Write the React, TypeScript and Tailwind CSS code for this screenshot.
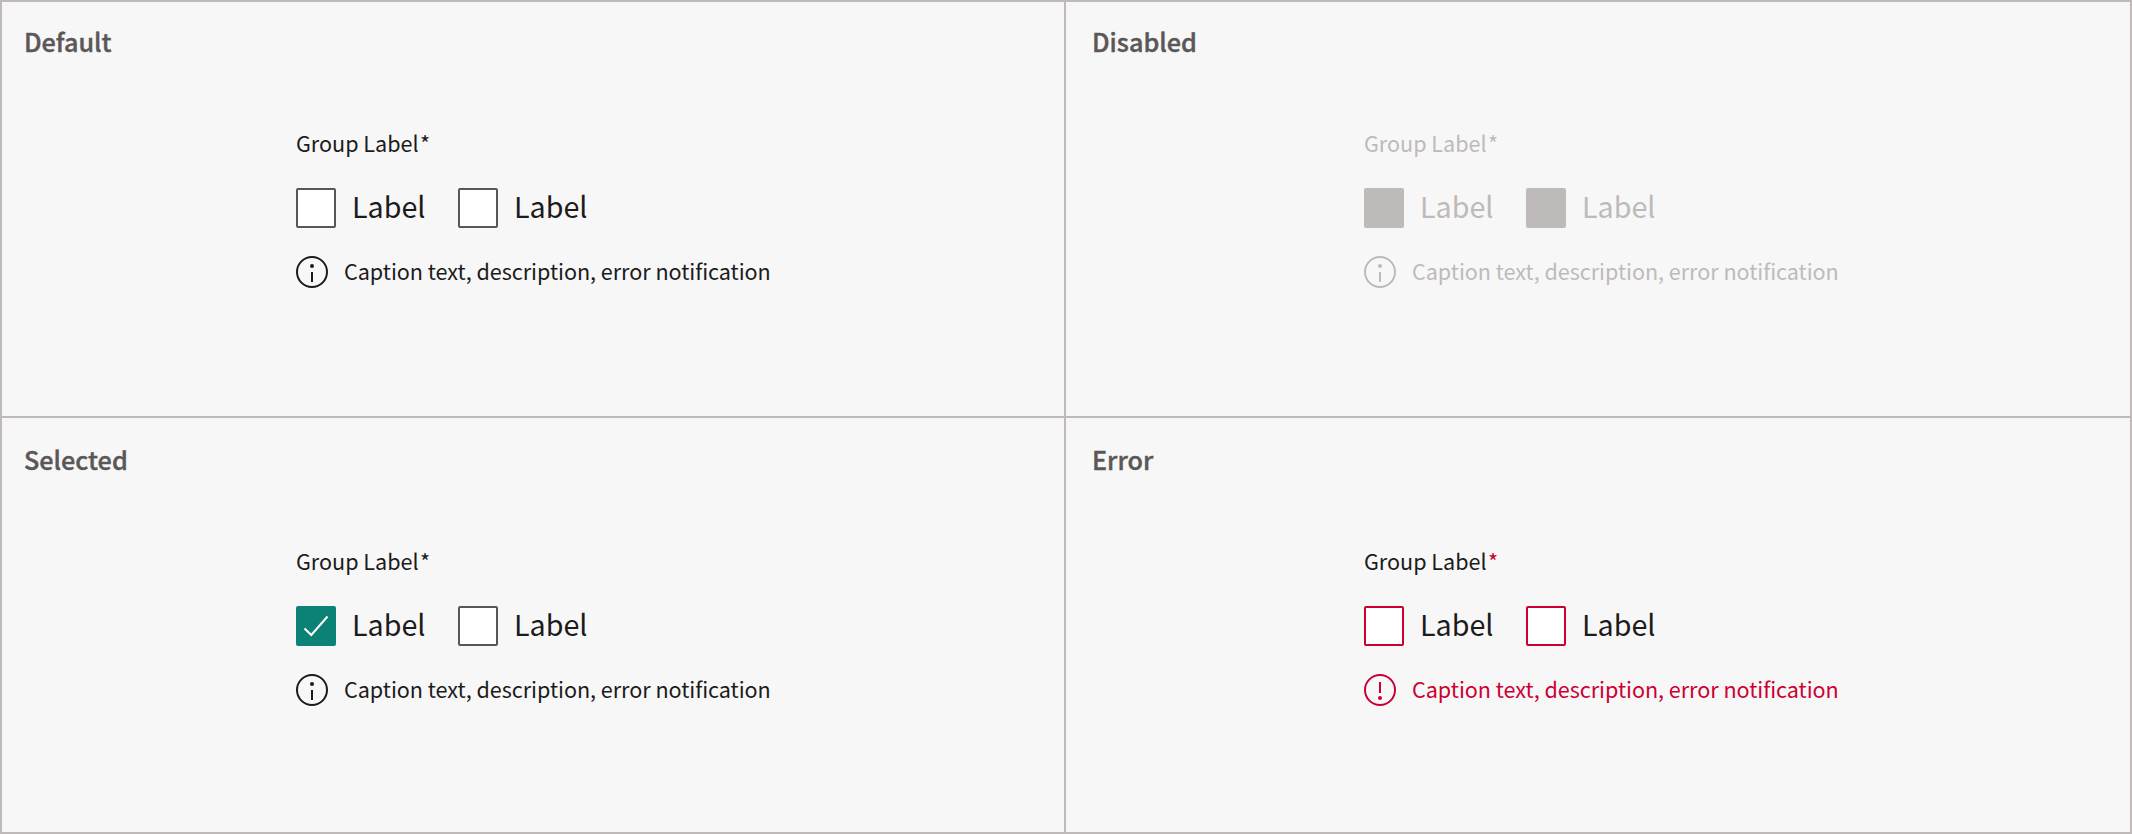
import type { ReactNode } from "react";

function InfoIcon() {
  return (
    <svg className="size-8 shrink-0" viewBox="0 0 32 32" fill="none">
      <circle cx="16" cy="16" r="15" stroke="currentColor" strokeWidth="2" />
      <circle cx="16" cy="10" r="2" fill="currentColor" />
      <path d="M16 16V26" stroke="currentColor" strokeWidth="2" />
    </svg>
  );
}

function AlertIcon() {
  return (
    <svg className="size-8 shrink-0" viewBox="0 0 32 32" fill="none">
      <circle cx="16" cy="16" r="15" stroke="currentColor" strokeWidth="2" />
      <path d="M16 8V19" stroke="currentColor" strokeWidth="2" />
      <circle cx="16" cy="24" r="2" fill="currentColor" />
    </svg>
  );
}

function Checkbox({ box, checked = false }: { box: string; checked?: boolean }) {
  return (
    <div className="flex h-10 items-center gap-4">
      <span className={`flex size-10 shrink-0 rounded-[2px] ${box}`}>
        {checked && (
          <svg className="size-10" viewBox="0 0 40 40" fill="none">
            <path d="M8.5 22.5L15.3 29L31.5 10.5" stroke="white" strokeWidth="2" />
          </svg>
        )}
      </span>
      <span className="w-[74px] pb-1 text-[28.7px] leading-10 whitespace-nowrap">Label</span>
    </div>
  );
}

type GroupProps = {
  text?: string;
  star?: string;
  caption?: string;
  firstBox?: string;
  box: string;
  checked?: boolean;
  icon?: ReactNode;
};

function Group({
  text = "text-[#1c1b1b]",
  star = "",
  caption = "",
  box,
  firstBox = box,
  checked = false,
  icon = <InfoIcon />,
}: GroupProps) {
  return (
    <div className={`flex flex-col ${text}`}>
      <div className="flex h-8 text-[21.6px] leading-8 whitespace-nowrap">
        <span className="w-[122px] tracking-[-0.02px]">Group Label</span>
        <span className={`ml-[2px] ${star}`}>*</span>
      </div>
      <div className="mt-[29px] flex gap-8">
        <Checkbox box={firstBox} checked={checked} />
        <Checkbox box={box} />
      </div>
      <div className={`mt-7 flex h-8 items-center gap-4 ${caption}`}>
        {icon}
        <span className="pb-0.5 text-[21.6px] leading-8 tracking-[-0.04px] whitespace-nowrap">
          Caption text, description, error notification
        </span>
      </div>
    </div>
  );
}

function Panel({ title, className, children }: { title: string; className: string; children: ReactNode }) {
  return (
    <section className={`border-[#bfb9b9] ${className}`}>
      <h2 className="h-10 text-[25.2px] leading-10 font-medium text-[#5b5757] [-webkit-text-stroke:0.4px_#5b5757]">
        {title}
      </h2>
      <div className="mt-[66px] pl-[272px]">{children}</div>
    </section>
  );
}

const outlined = "border-2 border-[#5b5555] bg-white";

export default function App() {
  return (
    <main className="grid h-[834px] w-[2132px] grid-cols-[1064px_1064px] grid-rows-[416px_414px] border-2 border-[#bfb9b9] bg-[#f7f7f7] font-['Noto_Sans_CJK_SC',sans-serif]">
      <Panel title="Default" className="border-r-2 border-b-2 pt-[19px] pl-[22px]">
        <Group box={outlined} />
      </Panel>
      <Panel title="Disabled" className="border-b-2 pt-[19px] pl-[26px]">
        <Group text="text-[#bfbaba]" box="bg-[#bfbaba]" />
      </Panel>
      <Panel title="Selected" className="border-r-2 pt-[21px] pl-[22px]">
        <Group firstBox="bg-[#0c8276]" box={outlined} checked />
      </Panel>
      <Panel title="Error" className="pt-[21px] pl-[26px]">
        <Group
          star="text-[#cc0033]"
          caption="text-[#cc0033]"
          box="border-2 border-[#cc0033] bg-white"
          icon={<AlertIcon />}
        />
      </Panel>
    </main>
  );
}
